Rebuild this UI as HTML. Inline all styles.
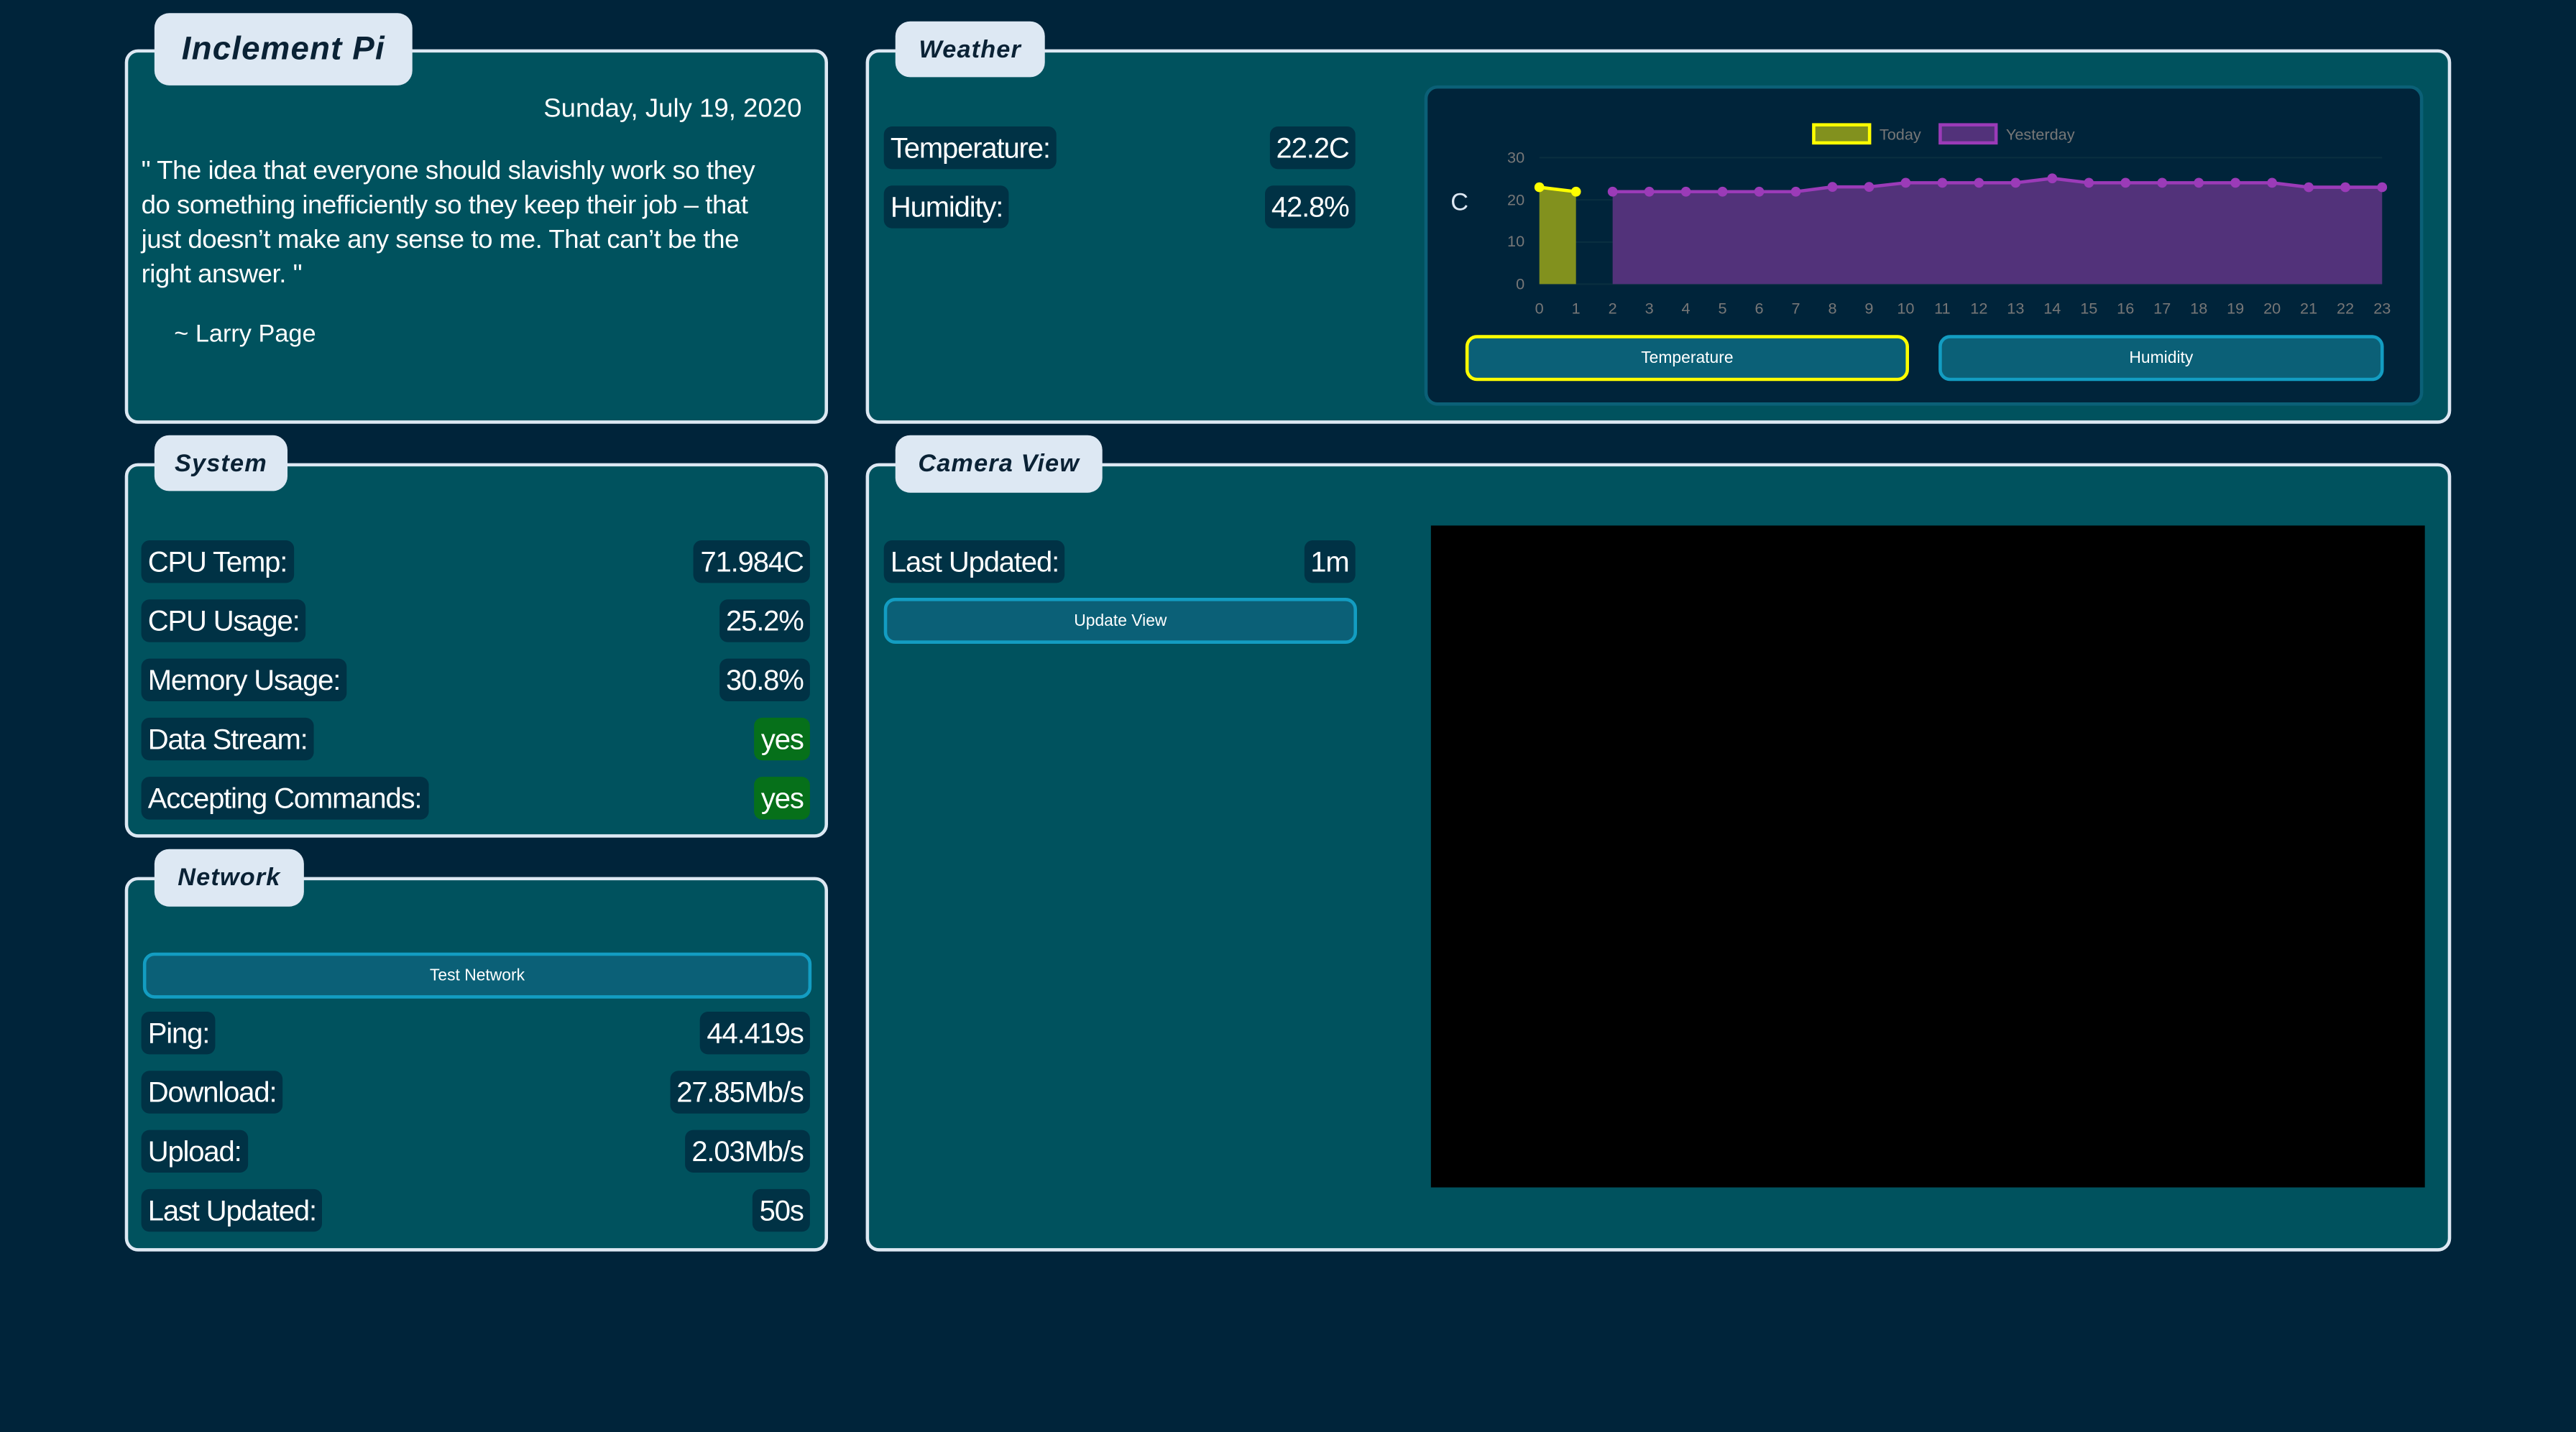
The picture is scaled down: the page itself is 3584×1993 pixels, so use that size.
<!DOCTYPE html>
<html><head><meta charset="utf-8"><style>
html,body{margin:0;padding:0;background:#00243a;width:3584px;height:1992px;overflow:hidden}
#w{position:absolute;left:0;top:0;width:1568px;height:872px;transform:scale(2.285714);transform-origin:0 0;font-family:"Liberation Sans",sans-serif;color:#fff}
.p{position:absolute;background:#00525e;border:2px solid #dde8f3;border-radius:8px;box-sizing:border-box}
.t{position:absolute;background:#dde8f3;color:#0a2235;border-radius:9px;font-weight:bold;font-style:italic;display:flex;align-items:center;justify-content:center;letter-spacing:0.5px}
.pill{position:absolute;background:#003245;border-radius:5px;height:26px;line-height:26px;font-size:17.5px;padding:0 4px;white-space:nowrap;letter-spacing:-0.5px}
.g{background:#06701a}
.btn{position:absolute;background:#0b6077;border:2px solid #139dc2;border-radius:7px;box-sizing:border-box;font-size:10px;display:flex;align-items:center;justify-content:center}
</style></head><body><div id="w">

<div class="p" style="left:76px;top:30px;width:428px;height:228px"></div>
<div class="t" style="left:94px;top:8px;width:157px;height:44px;font-size:20px">Inclement Pi</div>
<div style="position:absolute;right:1080px;top:58px;font-size:16px">Sunday, July 19, 2020</div>
<div style="position:absolute;left:86px;top:94px;width:420px;font-size:16px;line-height:21px;letter-spacing:-0.2px;white-space:nowrap">" The idea that everyone should slavishly work so they<br>do something inefficiently so they keep their job – that<br>just doesn’t make any sense to me. That can’t be the<br>right answer. "</div>
<div style="position:absolute;left:106px;top:195px;font-size:15px">~ Larry Page</div>

<div class="p" style="left:527px;top:30px;width:965px;height:228px"></div>
<div class="t" style="left:545px;top:13px;width:91px;height:34px;font-size:15px">Weather</div>
<div class="pill" style="left:538px;top:77px">Temperature:</div>
<div class="pill" style="right:743px;top:77px">22.2C</div>
<div class="pill" style="left:538px;top:113px">Humidity:</div>
<div class="pill" style="right:743px;top:113px">42.8%</div>
<div style="position:absolute;left:867px;top:52px;width:608px;height:195px;background:#00243a;border:2px solid #0b6077;border-radius:8px;box-sizing:border-box"></div>
<svg style="position:absolute;left:0;top:0" width="1568" height="872">
<g font-family="Liberation Sans,sans-serif" font-size="9.5" fill="#777">
<rect x="1104" y="76" width="34" height="11" fill="#82911e" stroke="#ffff00" stroke-width="2"/>
<text x="1144" y="85">Today</text>
<rect x="1181" y="76" width="34" height="11" fill="#52327a" stroke="#9b3bb8" stroke-width="2"/>
<text x="1221" y="85">Yesterday</text>
<text x="928" y="99" text-anchor="end">30</text><text x="928" y="125" text-anchor="end">20</text><text x="928" y="150" text-anchor="end">10</text><text x="928" y="176" text-anchor="end">0</text>
</g>
<text x="883" y="128" font-family="Liberation Sans,sans-serif" font-size="15" fill="#dde8f3">C</text>
<g stroke="#0a2f40" stroke-width="0.8"><line x1="937" y1="96" x2="1450" y2="96"/><line x1="937" y1="121.7" x2="1450" y2="121.7"/><line x1="937" y1="147.4" x2="1450" y2="147.4"/><line x1="937" y1="173" x2="1450" y2="173"/></g>
<polygon points="937,114 959.3,116.7 959.3,173 937,173" fill="#82911e"/>
<polyline points="937,114 959.3,116.7" fill="none" stroke="#ffff00" stroke-width="2"/>
<circle cx="937" cy="114" r="3" fill="#ffff00"/><circle cx="959.3" cy="116.7" r="3" fill="#ffff00"/>
<polygon points="981.6,116.7 1003.9,116.7 1026.2,116.7 1048.5,116.7 1070.8,116.7 1093.1,116.7 1115.4,113.8 1137.7,113.8 1160,111.3 1182.3,111.3 1204.6,111.3 1226.9,111.3 1249.2,108.6 1271.5,111.3 1293.8,111.3 1316.1,111.3 1338.4,111.3 1360.7,111.3 1383,111.3 1405.3,114 1427.6,114 1450,114 1450,173 981.6,173" fill="#52327a"/>
<polyline points="981.6,116.7 1003.9,116.7 1026.2,116.7 1048.5,116.7 1070.8,116.7 1093.1,116.7 1115.4,113.8 1137.7,113.8 1160,111.3 1182.3,111.3 1204.6,111.3 1226.9,111.3 1249.2,108.6 1271.5,111.3 1293.8,111.3 1316.1,111.3 1338.4,111.3 1360.7,111.3 1383,111.3 1405.3,114 1427.6,114 1450,114" fill="none" stroke="#9b3bb8" stroke-width="2"/>
<g fill="#9b3bb8">
<circle cx="981.6" cy="116.7" r="3"/><circle cx="1003.9" cy="116.7" r="3"/><circle cx="1026.2" cy="116.7" r="3"/><circle cx="1048.5" cy="116.7" r="3"/><circle cx="1070.8" cy="116.7" r="3"/><circle cx="1093.1" cy="116.7" r="3"/><circle cx="1115.4" cy="113.8" r="3"/><circle cx="1137.7" cy="113.8" r="3"/><circle cx="1160" cy="111.3" r="3"/><circle cx="1182.3" cy="111.3" r="3"/><circle cx="1204.6" cy="111.3" r="3"/><circle cx="1226.9" cy="111.3" r="3"/><circle cx="1249.2" cy="108.6" r="3"/><circle cx="1271.5" cy="111.3" r="3"/><circle cx="1293.8" cy="111.3" r="3"/><circle cx="1316.1" cy="111.3" r="3"/><circle cx="1338.4" cy="111.3" r="3"/><circle cx="1360.7" cy="111.3" r="3"/><circle cx="1383" cy="111.3" r="3"/><circle cx="1405.3" cy="114" r="3"/><circle cx="1427.6" cy="114" r="3"/><circle cx="1450" cy="114" r="3"/>
</g>
<g font-family="Liberation Sans,sans-serif" font-size="9.5" fill="#777" text-anchor="middle">
<text x="937" y="191">0</text><text x="959.3" y="191">1</text><text x="981.6" y="191">2</text><text x="1003.9" y="191">3</text><text x="1026.2" y="191">4</text><text x="1048.5" y="191">5</text><text x="1070.8" y="191">6</text><text x="1093.1" y="191">7</text><text x="1115.4" y="191">8</text><text x="1137.7" y="191">9</text><text x="1160" y="191">10</text><text x="1182.3" y="191">11</text><text x="1204.6" y="191">12</text><text x="1226.9" y="191">13</text><text x="1249.2" y="191">14</text><text x="1271.5" y="191">15</text><text x="1293.8" y="191">16</text><text x="1316.1" y="191">17</text><text x="1338.4" y="191">18</text><text x="1360.7" y="191">19</text><text x="1383" y="191">20</text><text x="1405.3" y="191">21</text><text x="1427.6" y="191">22</text><text x="1450" y="191">23</text>
</g>
</svg>
<div class="btn" style="left:892px;top:204px;width:270px;height:28px;border-color:#ffff00">Temperature</div>
<div class="btn" style="left:1180px;top:204px;width:271px;height:28px">Humidity</div>

<div class="p" style="left:76px;top:282px;width:428px;height:228px"></div>
<div class="t" style="left:94px;top:265px;width:81px;height:34px;font-size:15px">System</div>
<div class="pill" style="left:86px;top:329px">CPU Temp:</div><div class="pill" style="right:1075px;top:329px">71.984C</div>
<div class="pill" style="left:86px;top:365px">CPU Usage:</div><div class="pill" style="right:1075px;top:365px">25.2%</div>
<div class="pill" style="left:86px;top:401px">Memory Usage:</div><div class="pill" style="right:1075px;top:401px">30.8%</div>
<div class="pill" style="left:86px;top:437px">Data Stream:</div><div class="pill g" style="right:1075px;top:437px">yes</div>
<div class="pill" style="left:86px;top:473px">Accepting Commands:</div><div class="pill g" style="right:1075px;top:473px">yes</div>

<div class="p" style="left:76px;top:534px;width:428px;height:228px"></div>
<div class="t" style="left:94px;top:517px;width:91px;height:35px;font-size:15px">Network</div>
<div class="btn" style="left:87px;top:580px;width:407px;height:28px">Test Network</div>
<div class="pill" style="left:86px;top:616px">Ping:</div><div class="pill" style="right:1075px;top:616px">44.419s</div>
<div class="pill" style="left:86px;top:652px">Download:</div><div class="pill" style="right:1075px;top:652px">27.85Mb/s</div>
<div class="pill" style="left:86px;top:688px">Upload:</div><div class="pill" style="right:1075px;top:688px">2.03Mb/s</div>
<div class="pill" style="left:86px;top:724px">Last Updated:</div><div class="pill" style="right:1075px;top:724px">50s</div>

<div class="p" style="left:527px;top:282px;width:965px;height:480px"></div>
<div class="t" style="left:545px;top:265px;width:126px;height:35px;font-size:15px">Camera View</div>
<div class="pill" style="left:538px;top:329px">Last Updated:</div><div class="pill" style="right:743px;top:329px">1m</div>
<div class="btn" style="left:538px;top:364px;width:288px;height:28px">Update View</div>
<div style="position:absolute;left:871px;top:320px;width:605px;height:403px;background:#000"></div>

</div></body></html>
